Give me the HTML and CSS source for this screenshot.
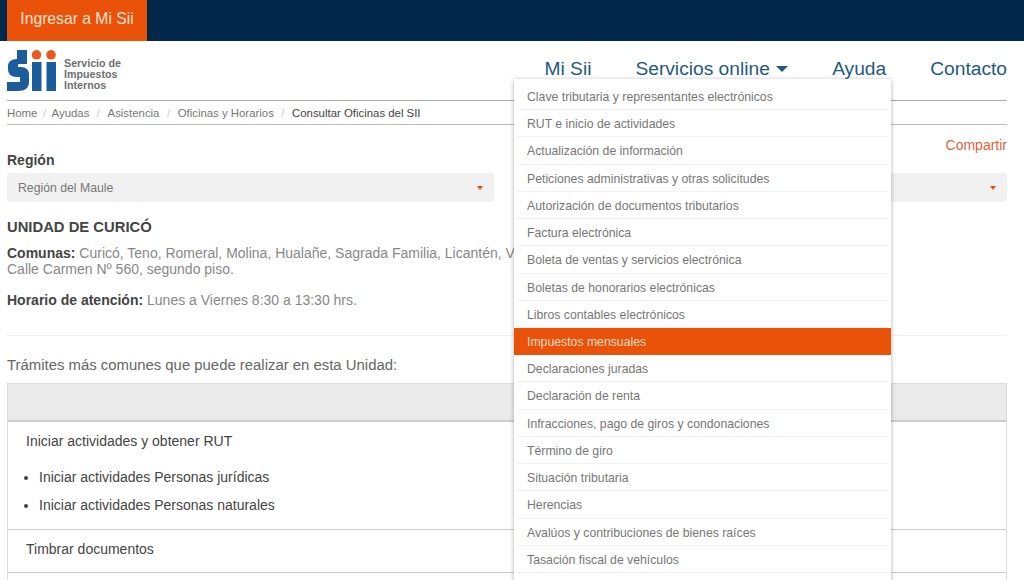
FILE: index.html
```html
<!DOCTYPE html>
<html lang="es">
<head>
    <meta charset="UTF-8">
    <meta name="viewport" content="width=device-width, initial-scale=1.0">
    <title>Consultar Oficinas del SII</title>
    <link rel="stylesheet" href="styles.css">
</head>
<body>
    <div class="topBar">
        <a class="loginBtn" href="#">Ingresar a Mi Sii</a>
    </div>

    <div class="page">
        <header class="siteHeader">
            <a class="logo" href="#">
                <svg class="logoMark" width="50" height="42" viewBox="0 0 50 42">
                    <rect x="10" y="0" width="10" height="9" fill="#1b5d9c"/>
                    <path d="M20 9H10C4 9 1 12 1 16V19C1 24 4 27 10 27H13V32H0V41H11C18 41 22 38 22 32V24C22 20 19 17 14 17H11V15C11 14.500 11.500 14 12 14H20Z" fill="#1b5d9c"/>
                    <circle cx="29.500" cy="4.800" r="4.800" fill="#ea5a1c"/>
                    <circle cx="44" cy="4.800" r="4.800" fill="#ea5a1c"/>
                    <rect x="25" y="12" width="9.500" height="29" fill="#1b5d9c"/>
                    <rect x="39.500" y="12" width="9.500" height="29" fill="#1b5d9c"/>
                </svg>
                <span class="logoText">Servicio de<br>Impuestos<br>Internos</span>
            </a>
            <nav class="mainNav">
                <a href="#">Mi Sii</a>
                <a href="#">Servicios online <span class="navCaret"></span></a>
                <a href="#">Ayuda</a>
                <a href="#">Contacto</a>
            </nav>
        </header>

        <ul class="dropMenu">
            <li><a href="#">Clave tributaria y representantes electrónicos</a></li>
            <li><a href="#">RUT e inicio de actividades</a></li>
            <li><a href="#">Actualización de información</a></li>
            <li><a href="#">Peticiones administrativas y otras solicitudes</a></li>
            <li><a href="#">Autorización de documentos tributarios</a></li>
            <li><a href="#">Factura electrónica</a></li>
            <li><a href="#">Boleta de ventas y servicios electrónica</a></li>
            <li><a href="#">Boletas de honorarios electrónicas</a></li>
            <li><a href="#">Libros contables electrónicos</a></li>
            <li class="active"><a href="#">Impuestos mensuales</a></li>
            <li><a href="#">Declaraciones juradas</a></li>
            <li><a href="#">Declaración de renta</a></li>
            <li><a href="#">Infracciones, pago de giros y condonaciones</a></li>
            <li><a href="#">Término de giro</a></li>
            <li><a href="#">Situación tributaria</a></li>
            <li><a href="#">Herencias</a></li>
            <li><a href="#">Avalúos y contribuciones de bienes raíces</a></li>
            <li><a href="#">Tasación fiscal de vehículos</a></li>
        </ul>

        <ol class="crumbs">
            <li><a href="#">Home</a></li>
            <li><a href="#">Ayudas</a></li>
            <li><a href="#">Asistencia</a></li>
            <li><a href="#">Oficinas y Horarios</a></li>
            <li class="current">Consultar Oficinas del SII</li>
        </ol>

        <div class="shareRow"><a href="#">Compartir</a></div>

        <div class="filters">
            <div class="filter">
                <label class="filterLabel">Región</label>
                <div class="selectBox">Región del Maule <span class="selectCaret"></span></div>
            </div>
            <div class="filter filterRight">
                <div class="selectBox"><span></span><span class="selectCaret"></span></div>
            </div>
        </div>

        <h2 class="unitTitle">UNIDAD DE CURICÓ</h2>
        <p class="unitInfo"><b>Comunas:</b> Curicó, Teno, Romeral, Molina, Hualañe, Sagrada Familia, Licantén, Vichuquén.<br>Calle Carmen Nº 560, segundo piso.</p>
        <p class="unitInfo"><b>Horario de atención:</b> Lunes a Viernes 8:30 a 13:30 hrs.</p>

        <hr class="divider">

        <p class="tableIntro">Trámites más comunes que puede realizar en esta Unidad:</p>

        <div class="tramites">
            <div class="tramitesHead"></div>
            <div class="tramiteRow">
                <div class="tramiteName">Iniciar actividades y obtener RUT</div>
                <ul class="tramiteList">
                    <li>Iniciar actividades Personas jurídicas</li>
                    <li>Iniciar actividades Personas naturales</li>
                </ul>
            </div>
            <div class="tramiteRow">
                <div class="tramiteName">Timbrar documentos</div>
            </div>
        </div>
    </div>
</body>
</html>
```

FILE: styles.css
```css
html, body {
    height: 580px;
    overflow: hidden;
}

body {
    margin: 0;
    background: #fff;
    font-family: 'Liberation Sans', Arial, sans-serif;
    font-size: 14px;
    color: #777;
}

a {
    color: inherit;
    text-decoration: none;
}

.topBar {
    height: 41px;
    background-color: #03294a;
    padding-left: 7px;
}

.loginBtn {
    display: block;
    width: 140px;
    height: 41px;
    line-height: 38px;
    text-align: center;
    background-color: #ea5209;
    color: #fbe3d0;
    font-size: 15.700px;
}

.page {
    position: relative;
    padding: 0 17px 0 7px;
}

.siteHeader {
    display: flex;
    justify-content: space-between;
    height: 59px;
    border-bottom: 1px solid #aaa;
}

.logo {
    display: flex;
    align-items: flex-start;
    padding-top: 9px;
}

.logoMark {
    display: block;
}

.logoText {
    margin: 8px 0 0 7px;
    font-size: 10.700px;
    line-height: 11px;
    font-weight: bold;
    color: #6d6f72;
}

.mainNav {
    display: flex;
    gap: 44px;
    padding-top: 17px;
    font-size: 19.200px;
    line-height: 22px;
    color: #1f5a80;
}

.navCaret {
    display: inline-block;
    margin-left: 1px;
    vertical-align: 3px;
    border-top: 6px solid #1f5a80;
    border-left: 6px solid transparent;
    border-right: 6px solid transparent;
}

.dropMenu {
    position: absolute;
    top: 38px;
    left: 514px;
    width: 377px;
    margin: 0;
    padding: 4px 0 30px;
    list-style: none;
    background: #fff;
    box-shadow: 0 1px 5px rgba(0, 0, 0, 0.3);
    font-size: 12.250px;
    z-index: 5;
}

.dropMenu li {
    height: 27.230px;
    box-sizing: border-box;
    margin: 0 3px;
    border-bottom: 1px solid #f1f1f1;
}

.dropMenu a {
    display: block;
    height: 26px;
    padding-left: 10px;
    line-height: 28px;
    color: #777;
}

.dropMenu li.active {
    margin: 0;
    background-color: #ea5209;
    border-bottom: none;
}

.dropMenu li.active a {
    padding-left: 13px;
    color: #fbdcc4;
}

.crumbs {
    display: flex;
    height: 23px;
    margin: 0;
    padding: 0;
    list-style: none;
    border-bottom: 1px solid #bbb;
    font-size: 11.400px;
    line-height: 25px;
    color: #777;
}

.crumbs li + li::before {
    content: "/";
    padding: 0 7.500px;
    color: #ccc;
}

.crumbs li:nth-child(2)::before {
    padding: 0 5.500px;
}

.crumbs .current {
    color: #444;
}

.shareRow {
    padding-top: 11px;
    height: 15px;
    text-align: right;
    font-size: 14px;
    line-height: 18px;
    color: #e0653a;
}

.filters {
    display: grid;
    grid-template-columns: 487px 491px;
    gap: 22px;
}

.filterLabel {
    display: block;
    height: 22px;
    font-size: 14px;
    line-height: 18px;
    font-weight: bold;
    color: #444;
}

.filterRight {
    padding-top: 22px;
}

.selectBox {
    display: flex;
    justify-content: space-between;
    align-items: center;
    height: 29px;
    padding: 0 11px;
    background-color: #f1f1f1;
    border-radius: 3px;
    font-size: 12.250px;
    color: #777;
}

.selectCaret {
    border-top: 4px solid #ea5209;
    border-left: 3.500px solid transparent;
    border-right: 3.500px solid transparent;
}

.unitTitle {
    margin: 16px 0 0;
    font-size: 14.800px;
    line-height: 18px;
    font-weight: bold;
    color: #444;
}

.unitInfo {
    margin: 9px 0 15px;
    font-size: 14px;
    line-height: 16px;
    color: #888;
}

.unitInfo b {
    color: #444;
}

.divider {
    margin: 27px 0 0;
    border: none;
    border-top: 1px solid #eee;
}

.tableIntro {
    margin: 20px 0 0;
    font-size: 14.900px;
    line-height: 18px;
    color: #666;
}

.tramites {
    margin-top: 9px;
    padding-bottom: 30px;
    border: 1px solid #ddd;
}

.tramitesHead {
    height: 36px;
    background-color: #ebebeb;
    border-bottom: 2px solid #ccc;
}

.tramiteRow {
    padding: 9px 18px 13px;
    border-bottom: 1px solid #ccc;
    font-size: 14px;
    line-height: 20px;
    color: #444;
}

.tramiteList {
    margin: 16px 0 1px;
    padding-left: 13px;
}

.tramiteList li + li {
    margin-top: 8px;
}
```
